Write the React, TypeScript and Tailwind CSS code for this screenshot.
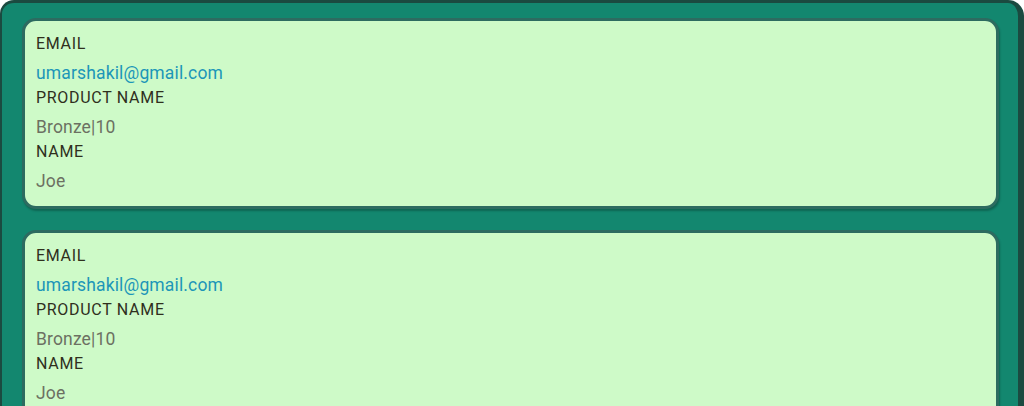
const entries = [
  { email: 'umarshakil@gmail.com', product: 'Bronze|10', name: 'Joe' },
  { email: 'umarshakil@gmail.com', product: 'Bronze|10', name: 'Joe' },
]

function Field({ label, value, valueClass }: { label: string; value: string; valueClass: string }) {
  return (
    <div className="flex flex-col">
      <span className="text-[16px] leading-[20px] text-[#2f2f1d] tracking-[0.7px]">{label}</span>
      <span className={`text-[17.5px] leading-[30px] pt-[4px] tracking-[0.15px] ${valueClass}`}>{value}</span>
    </div>
  )
}

function OrderCard({ email, product, name }: { email: string; product: string; name: string }) {
  return (
    <div className="rounded-[14px] border-[3px] border-[#2d6b60] bg-[#cefac8] pl-[11px] pr-[11px] pt-[13px] pb-[10px] shadow-[1px_2px_2px_rgba(0,0,0,0.25)]">
      <Field label="EMAIL" value={email} valueClass="text-[#1c96b8]" />
      <Field label="PRODUCT NAME" value={product} valueClass="text-[#6c7062]" />
      <Field label="NAME" value={name} valueClass="text-[#6c7062]" />
    </div>
  )
}

export default function App() {
  return (
    <div className="h-[406px] w-[1024px] overflow-hidden bg-white" style={{ fontFamily: 'Roboto, "Noto Sans", sans-serif' }}>
      <div className="h-[460px] rounded-tl-[14px] rounded-tr-[16px] border-t-[3px] border-l-[2px] border-r-[6px] border-[#1b4a40] bg-[#13876f] pl-[20px] pr-[19px] pt-[15px] flex flex-col gap-[21px]">
        {entries.map((e, i) => (
          <OrderCard key={i} {...e} />
        ))}
      </div>
    </div>
  )
}
